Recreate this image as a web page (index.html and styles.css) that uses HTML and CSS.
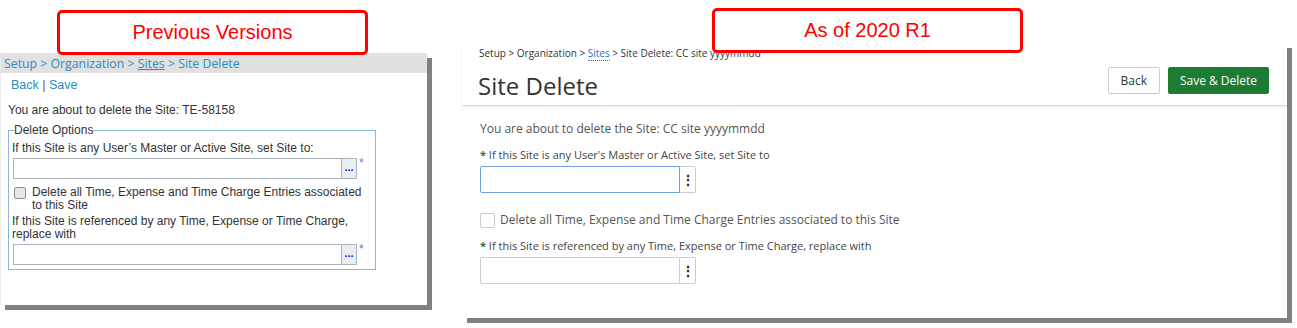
FILE: index.html
```html
<!DOCTYPE html>
<html lang="en">
<head>
  <meta charset="UTF-8">
  <title>Site Delete - Previous Versions vs 2020 R1</title>
  <link rel="stylesheet" href="styles.css">
</head>
<body>
  <div class="stage">
    <!-- Old screen -->
    <div class="shot old">
      <div class="old-crumbs">Setup &gt; Organization &gt; <a href="#">Sites</a> &gt; Site Delete</div>
      <div class="old-links"><a href="#">Back</a> <span class="sep">|</span> <a href="#">Save</a></div>
      <p class="old-msg">You are about to delete the Site: TE-58158</p>
      <fieldset class="old-options">
        <legend>Delete Options</legend>
        <div class="old-label">If this Site is any User’s Master or Active Site, set Site to:</div>
        <div class="old-field">
          <div class="old-input"></div>
          <div class="old-pick">...</div>
          <span class="old-req">*</span>
        </div>
        <div class="old-check">
          <span class="old-box"></span>
          <span>Delete all Time, Expense and Time Charge Entries associated to this Site</span>
        </div>
        <div class="old-label">If this Site is referenced by any Time, Expense or Time Charge, replace with</div>
        <div class="old-field">
          <div class="old-input"></div>
          <div class="old-pick">...</div>
          <span class="old-req">*</span>
        </div>
      </fieldset>
    </div>

    <!-- New screen -->
    <div class="shot new">
      <div class="new-head">
        <div>
          <div class="new-crumbs">Setup &gt; Organization &gt; <a href="#">Sites</a> &gt; Site Delete: CC site yyyymmdd</div>
          <h1>Site Delete</h1>
        </div>
        <div class="new-actions">
          <button class="btn">Back</button>
          <button class="btn btn-green">Save &amp; Delete</button>
        </div>
      </div>
      <div class="new-body">
        <p class="new-msg">You are about to delete the Site: CC site yyyymmdd</p>
        <div class="new-label"><span class="star">*</span> If this Site is any User's Master or Active Site, set Site to</div>
        <div class="new-field">
          <div class="new-input focus"></div>
          <div class="new-menu">⋮</div>
        </div>
        <div class="new-check">
          <span class="new-box"></span>
          <span>Delete all Time, Expense and Time Charge Entries associated to this Site</span>
        </div>
        <div class="new-label"><span class="star">*</span> If this Site is referenced by any Time, Expense or Time Charge, replace with</div>
        <div class="new-field">
          <div class="new-input"></div>
          <div class="new-menu">⋮</div>
        </div>
      </div>
    </div>

    <!-- Annotations -->
    <div class="note note-left">Previous Versions</div>
    <div class="note note-right">As of 2020 R1</div>
  </div>
</body>
</html>
```

FILE: styles.css
```css
* { box-sizing: border-box; }
body {
  margin: 0;
  background: #fff;
  font-family: "Liberation Sans", Arial, sans-serif;
}
.stage {
  position: relative;
  display: flex;
  align-items: flex-start;
  width: 1297px;
  height: 328px;
}
.shot {
  background: #fff;
  box-shadow: 5px 5px 0 #808080;
}

/* ---- old screen ---- */
.old {
  margin-top: 53px;
  width: 427px;
  height: 252px;
  border-left: 1px solid #ececec;
  font-size: 12px;
  color: #333;
}
.old-crumbs {
  height: 20px;
  line-height: 21px;
  padding-left: 3px;
  background: #e1e1e1;
  font-family: "Open Sans", sans-serif;
  font-size: 12.3px;
  color: #2a8bc7;
}
.old-crumbs a { color: #2a8bc7; }
.old-links {
  margin-top: 5px;
  padding-left: 10px;
  line-height: 15px;
  font-size: 12.5px;
}
.old-links a { color: #2a8bc7; text-decoration: none; }
.old-links .sep { color: #7a3fa0; }
.old-msg {
  margin: 10px 0 0 7px;
  line-height: 14px;
}
.old-options {
  margin: 6px 0 0 7px;
  width: 368px;
  padding: 5px 3px 4px 3px;
  border: 1px solid #88b8d8;
}
.old-options legend {
  padding: 0;
  margin-left: 2px;
  line-height: 14px;
  font-size: 12px;
}
.old-label {
  line-height: 13px;
  padding-right: 10px;
}
.old-field {
  display: flex;
  align-items: flex-start;
  margin: 3px 0 0 1px;
}
.old-input {
  width: 328px;
  height: 21px;
  border: 1px solid #a9b4bd;
  border-right: none;
}
.old-pick {
  width: 16px;
  height: 21px;
  border: 1px solid #a9b4bd;
  background: #e9eef3;
  color: #1010ff;
  font-weight: bold;
  font-size: 11px;
  line-height: 17px;
  text-align: center;
}
.old-req {
  margin-left: 2px;
  color: #3d8fd0;
  font-size: 12px;
  line-height: 10px;
}
.old-check {
  display: flex;
  align-items: flex-start;
  gap: 6px;
  margin: 7px 0 3px 2px;
  line-height: 13px;
  padding-right: 8px;
}
.old-box {
  flex: none;
  width: 12px;
  height: 12px;
  margin-top: 1px;
  border: 1px solid #8f8f8f;
  border-radius: 2px;
  background: #e6e6e6;
}

/* ---- new screen ---- */
.new {
  margin: 43px 0 0 35px;
  width: 825px;
  height: 275px;
  font-family: "Open Sans", sans-serif;
  color: #555;
}
.new-head {
  display: flex;
  justify-content: space-between;
  align-items: flex-start;
  height: 63px;
  padding: 0 18px 0 16px;
  border-bottom: 1px solid #d9d9d9;
  box-shadow: 0 1px 2px rgba(0, 0, 0, 0.08);
}
.new-crumbs {
  margin-top: 3px;
  padding-left: 1px;
  font-size: 10px;
  line-height: 14px;
  color: #333;
}
.new-crumbs a {
  color: #2a6fc4;
  text-decoration: none;
  border-bottom: 1px dotted #2a6fc4;
}
.new h1 {
  margin: 11px 0 0 0;
  font-size: 24px;
  font-weight: 400;
  line-height: 30px;
  color: #333;
}
.new-actions {
  display: flex;
  gap: 8px;
  margin-top: 24px;
}
.btn {
  height: 27px;
  padding: 0 12px;
  border: 1px solid #ccc;
  border-radius: 2px;
  background: #fff;
  color: #333;
  font-family: "Open Sans", sans-serif;
  font-size: 12px;
}
.btn-green {
  width: 101px;
  padding: 0;
  border-color: #1e7b34;
  background: #1e7b34;
  color: #fff;
}
.new-body {
  padding: 15px 0 0 18px;
}
.new-msg {
  margin: 0;
  font-size: 12px;
  line-height: 16px;
}
.new-label {
  margin-top: 11px;
  font-size: 11px;
  line-height: 14px;
  color: #444;
}
.star { color: #1e7b34; font-weight: bold; }
.new-field {
  display: flex;
  margin-top: 4px;
}
.new-input {
  width: 200px;
  height: 27px;
  border: 1px solid #ccc;
  border-radius: 2px 0 0 2px;
}
.new-input.focus { border-color: #6f9fe6; }
.new-menu {
  width: 16px;
  height: 27px;
  border: 1px solid #ccc;
  border-left: none;
  border-radius: 0 2px 2px 0;
  color: #222;
  font-size: 14px;
  font-weight: bold;
  line-height: 25px;
  text-align: center;
}
.new-check {
  display: flex;
  align-items: center;
  gap: 5px;
  margin-top: 19px;
  font-size: 12px;
  line-height: 16px;
}
.new-box {
  width: 15px;
  height: 15px;
  border: 1px solid #ccc;
  border-radius: 2px;
}
.new-check + .new-label { margin-top: 11px; }

/* ---- annotations ---- */
.note {
  position: absolute;
  width: 311px;
  height: 45px;
  border: 3px solid #ff0000;
  border-radius: 5px;
  background: #fff;
  color: #ff0000;
  font-size: 20px;
  line-height: 39px;
  text-align: center;
}
.note-left { left: 57px; top: 10px; }
.note-right { left: 712px; top: 8px; }
```
